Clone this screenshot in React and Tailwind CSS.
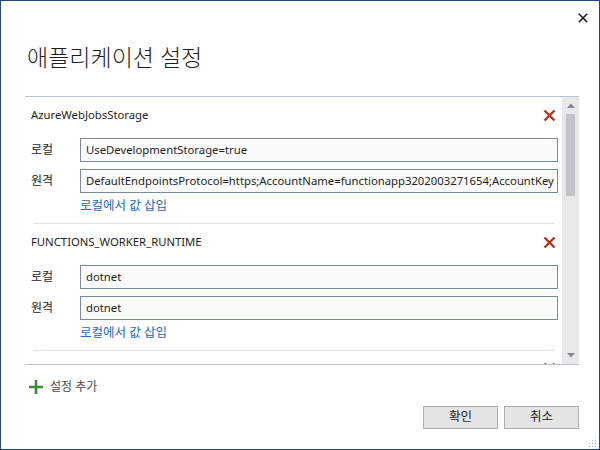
import React from "react";

const FONT = { fontFamily: '"Noto Sans", "Noto Sans CJK KR", sans-serif' };

function RedX() {
  return (
    <svg width="13" height="13" viewBox="0 0 13 13">
      <path d="M1.5 1.5 L11.5 11.5 M11.5 1.5 L1.5 11.5" stroke="#b5321c" strokeWidth="2.4" strokeLinecap="butt" />
    </svg>
  );
}

function Item({ name, local, remote }) {
  return (
    <div className="flex flex-col">
      <div className="flex h-[36px] items-center justify-between pl-[6px] pr-[6px]">
        <span className="text-[11.3px] text-[#1e1e1e]">{name}</span>
        <RedX />
      </div>
      <div className="mt-[5px] flex flex-col gap-[7px] pl-[6px] pr-[4px]">
        <div className="flex h-[24px] items-center">
          <span className="w-[49px] text-[12px] text-[#1e1e1e]">로컬</span>
          <div className="flex h-[24px] flex-1 items-center overflow-hidden whitespace-nowrap border border-[#7d889b] bg-[#fbfbfb] pl-[5px] text-[11.3px] text-[#1e1e1e]">
            {local}
          </div>
        </div>
        <div className="flex h-[24px] items-center">
          <span className="w-[49px] text-[12px] text-[#1e1e1e]">원격</span>
          <div className="flex h-[24px] flex-1 items-center overflow-hidden whitespace-nowrap border border-[#7d889b] bg-[#fbfbfb] pl-[5px] text-[11.3px] text-[#1e1e1e]">
            {remote}
          </div>
        </div>
      </div>
      <div className="flex h-[26px] items-center pl-[55px]">
        <span className="text-[12.5px] text-[#1a6dbf]">로컬에서 값 삽입</span>
      </div>
      <div className="mt-[4px] ml-[8px] mr-[7px] h-px shrink-0 bg-[#dfe2e9]" />
    </div>
  );
}

export default function App() {
  return (
    <div style={FONT} className="relative flex h-[450px] w-[600px] flex-col border border-[#26467f] bg-white">
      <div className="flex h-[39px] justify-end pr-[11px] pt-[12px]">
        <svg width="10" height="10" viewBox="0 0 10 10">
          <path d="M0.8 0.8 L9.2 9.2 M9.2 0.8 L0.8 9.2" stroke="#111" strokeWidth="1.5" />
        </svg>
      </div>
      <div className="h-[34px] pl-[26px] text-[23px] font-light leading-[34px] text-[#1e1e1e]">애플리케이션 설정</div>
      <div className="mx-[24px] mr-[20px] mt-[22px] flex h-[269px] border-y border-[#bcc2d5]">
        <div className="flex flex-1 flex-col overflow-hidden">
          <Item
            name="AzureWebJobsStorage"
            local="UseDevelopmentStorage=true"
            remote="DefaultEndpointsProtocol=https;AccountName=functionapp3202003271654;AccountKey"
          />
          <Item name="FUNCTIONS_WORKER_RUNTIME" local="dotnet" remote="dotnet" />
          <div className="flex h-[34px] shrink-0 items-center justify-end pr-[6px]">
            <RedX />
          </div>
        </div>
        <div className="flex w-[17px] flex-col bg-[#e8e8ec]">
          <div className="flex h-[17px] items-center justify-center">
            <svg width="8" height="5" viewBox="0 0 8 5">
              <path d="M0 5 L4 0.5 L8 5 Z" fill="#868897" />
            </svg>
          </div>
          <div className="flex-1">
            <div className="ml-[4px] h-[82px] w-[9px] bg-[#c2c3c9]" />
          </div>
          <div className="flex h-[17px] items-center justify-center">
            <svg width="8" height="5" viewBox="0 0 8 5">
              <path d="M0 0 L8 0 L4 4.5 Z" fill="#868897" />
            </svg>
          </div>
        </div>
      </div>
      <div className="mt-[12px] flex h-[20px] items-center gap-[7px] pl-[28px]">
        <svg width="14" height="14" viewBox="0 0 14 14">
          <path d="M7 0 V14 M0 7 H14" stroke="#3a8a33" strokeWidth="2.6" />
        </svg>
        <span className="text-[12px] text-[#4a4a4a]">설정 추가</span>
      </div>
      <div className="mt-[9px] flex justify-end gap-[6px] pr-[20px]">
        <div className="flex h-[23px] w-[75px] items-center justify-center border border-[#adadad] bg-[#e5e5e5] text-[12.5px] text-[#1e1e1e]">
          확인
        </div>
        <div className="flex h-[23px] w-[75px] items-center justify-center border border-[#adadad] bg-[#e5e5e5] text-[12.5px] text-[#1e1e1e]">
          취소
        </div>
      </div>
      <svg className="absolute bottom-[2px] right-[2px]" width="10" height="10" viewBox="0 0 10 10">
        {[
          [8, 0], [8, 3], [5, 3], [8, 6], [5, 6], [2, 6], [8, 9], [5, 9], [2, 9], [-1, 9],
        ].map(([x, y], i) => (
          <rect key={i} x={x} y={y} width="1" height="1" fill="#b0b0b0" />
        ))}
      </svg>
    </div>
  );
}
